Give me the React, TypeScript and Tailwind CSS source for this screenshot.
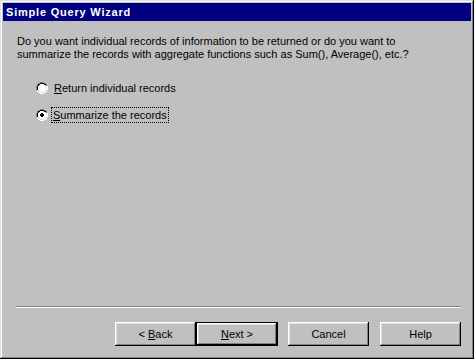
import React from 'react';

const FONT = "font-['Liberation_Sans',Arial,sans-serif]";

function Radio({ checked }: { checked: boolean }) {
  return (
    <svg width="12" height="12" viewBox="0 0 12 12" shapeRendering="crispEdges">
      {/* outer ring: gray top-left, white bottom-right */}
      <path d="M0 4h1v4h-1z M1 2h1v2h-1z M2 1h2v1h-2z M4 0h4v1h-4z M8 1h2v1h-2z M10 2h1v2h-1z" fill="#808080" />
      <path d="M11 4h1v4h-1z M10 8h1v2h-1z M8 10h2v1h-2z M4 11h4v1h-4z M2 10h2v1h-2z M1 8h1v2h-1z" fill="#ffffff" />
      {/* inner ring: black top-left, light bottom-right */}
      <path d="M1 4h1v4h-1z M2 2h1v2h-1z M4 1h4v1h-4z M8 2h2v1h-2z M2 2h2v1h-2z" fill="#000000" />
      <path d="M10 4h1v4h-1z M9 8h1v2h-1z M8 9h1v1h-1z M4 10h4v1h-4z M2 9h2v1h-2z" fill="#dfdfdf" />
      <path d="M4 2h4v1h1v1h1v4h-1v1h-1v1h-4v-1h-1v-1h-1v-4h1v-1h1z" fill="#ffffff" />
      {checked && <path d="M5 4h2v1h1v2h-1v1h-2v-1h-1v-2h1z" fill="#000000" />}
    </svg>
  );
}

function Button({ children, isDefault, width }: { children: React.ReactNode; isDefault?: boolean; width: string }) {
  return (
    <div className={`${width} h-[24px] flex ${isDefault ? 'border border-black' : ''}`}>
      <div className="flex-1 flex items-center justify-center bg-[#c0c0c0] text-[11px] text-black shadow-[inset_-1px_-1px_#000,inset_1px_1px_#fff,inset_-2px_-2px_#808080,inset_2px_2px_#dfdfdf]">
        {children}
      </div>
    </div>
  );
}

export default function App() {
  return (
    <div className={`w-[474px] h-[359px] bg-[#c0c0c0] p-[3px] flex flex-col ${FONT} shadow-[inset_-1px_-1px_#000,inset_1px_1px_#dfdfdf,inset_-2px_-2px_#808080,inset_2px_2px_#fff]`}>
      {/* Title bar */}
      <div className="h-[18px] bg-[#000080] flex items-center pl-[3px] flex-shrink-0">
        <span className="text-white text-[11px] font-bold tracking-[0.8px]">Simple Query Wizard</span>
      </div>

      <div className="flex-1 flex flex-col pl-[13px] pr-[10px] pb-[10px] text-[11px] text-black">
        <p className="mt-[14px] leading-[13px] ml-[1px]">
          Do you want individual records of information to be returned or do you want to
          <br />
          summarize the records with aggregate functions such as Sum(), Average(), etc.?
        </p>

        <div className="mt-[21px] ml-[20px] flex flex-col gap-[15px]">
          <div className="flex items-center h-[12px]">
            <Radio checked={false} />
            <span className="ml-[5px] px-[1px] leading-[13px]">
              <span className="underline underline-offset-[1px]">R</span>eturn individual records
            </span>
          </div>
          <div className="flex items-center h-[12px]">
            <Radio checked />
            <span className="ml-[4px] px-[1px] leading-[14px] outline-1 outline-dotted outline-black">
              <span className="underline underline-offset-[1px]">S</span>ummarize the records
            </span>
          </div>
        </div>

        <div className="mt-auto">
          <div className="h-[2px] border-t border-[#808080] border-b border-b-white" />
          <div className="mt-[14px] flex justify-end">
            <Button width="w-[81px]">
              &lt; <span className="underline ml-[3px]">B</span>ack
            </Button>
            <Button width="w-[82px]" isDefault>
              <span className="underline">N</span>ext &gt;
            </Button>
            <div className="w-[10px]" />
            <Button width="w-[81px]">Cancel</Button>
            <div className="w-[11px]" />
            <Button width="w-[81px]">Help</Button>
          </div>
        </div>
      </div>
    </div>
  );
}
